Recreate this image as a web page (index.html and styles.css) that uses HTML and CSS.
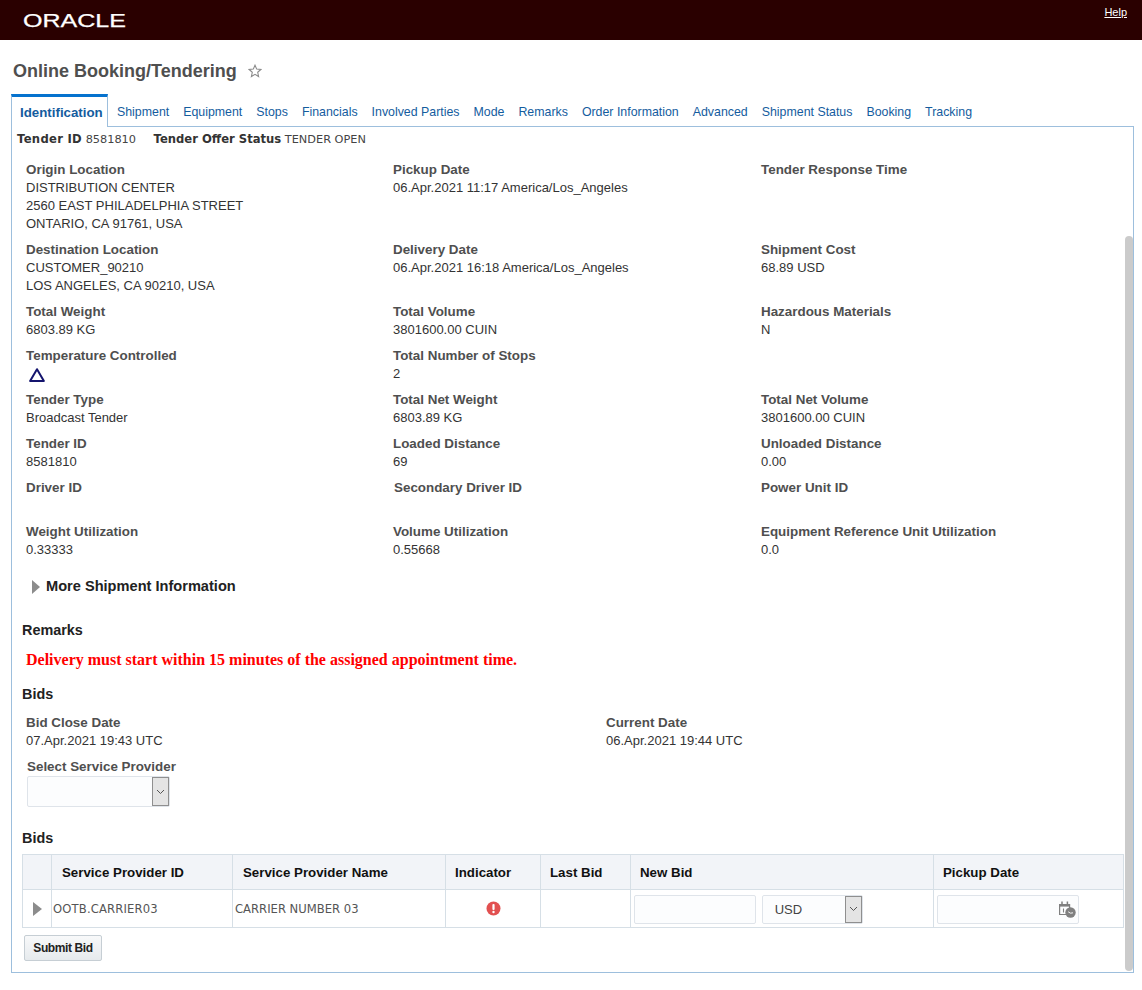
FILE: index.html
```html
<!DOCTYPE html>
<html lang="en">
<head>
<meta charset="utf-8">
<title>Online Booking/Tendering</title>
<link rel="stylesheet" href="styles.css">
</head>
<body>
<header class="brand">
  <svg class="logo" width="106" height="26" viewBox="0 0 106 26" role="img" aria-label="Oracle">
    <text x="0" y="19" class="logo-text" textLength="103" lengthAdjust="spacingAndGlyphs">ORACLE</text>
  </svg>
  <a class="help" href="#">Help</a>
</header>
<div class="title-row">
  <h1>Online Booking/Tendering</h1>
  <svg class="star" width="14" height="14" viewBox="0 0 14 14"><path d="M7 1.2l1.7 3.9 4.1.4-3.1 2.8.9 4.2L7 10.3l-3.6 2.2.9-4.2L1.2 5.5l4.1-.4z" fill="none" stroke="#8a8a8a" stroke-width="1.1"/></svg>
</div>
<nav class="tabs">
  <a class="tab active" href="#">Identification</a>
  <a class="tab" href="#">Shipment</a>
  <a class="tab" href="#">Equipment</a>
  <a class="tab" href="#">Stops</a>
  <a class="tab" href="#">Financials</a>
  <a class="tab" href="#">Involved Parties</a>
  <a class="tab" href="#">Mode</a>
  <a class="tab" href="#">Remarks</a>
  <a class="tab" href="#">Order Information</a>
  <a class="tab" href="#">Advanced</a>
  <a class="tab" href="#">Shipment Status</a>
  <a class="tab" href="#">Booking</a>
  <a class="tab" href="#">Tracking</a>
</nav>
<main class="panel">
  <div class="scrollbar"></div>
  <p class="summary"><b class="lead">Tender ID</b> 8581810 <b class="gap">Tender Offer Status</b> TENDER OPEN</p>
  <section class="facts">
    <div class="fact"><div class="label">Origin Location</div><div>DISTRIBUTION CENTER</div><div>2560 EAST PHILADELPHIA STREET</div><div>ONTARIO, CA 91761, USA</div></div>
    <div class="fact"><div class="label">Pickup Date</div><div>06.Apr.2021 11:17 America/Los_Angeles</div></div>
    <div class="fact"><div class="label">Tender Response Time</div></div>
    <div class="fact"><div class="label">Destination Location</div><div>CUSTOMER_90210</div><div>LOS ANGELES, CA 90210, USA</div></div>
    <div class="fact"><div class="label">Delivery Date</div><div>06.Apr.2021 16:18 America/Los_Angeles</div></div>
    <div class="fact"><div class="label">Shipment Cost</div><div>68.89 USD</div></div>
    <div class="fact"><div class="label">Total Weight</div><div>6803.89 KG</div></div>
    <div class="fact"><div class="label">Total Volume</div><div>3801600.00 CUIN</div></div>
    <div class="fact"><div class="label">Hazardous Materials</div><div>N</div></div>
    <div class="fact"><div class="label">Temperature Controlled</div><div class="icon-line"><svg width="18" height="18" viewBox="0 0 18 18"><path d="M9 4.2L15.9 16H2.1z" fill="none" stroke="#14146e" stroke-width="2" stroke-linejoin="round"/></svg></div></div>
    <div class="fact"><div class="label">Total Number of Stops</div><div>2</div></div>
    <div class="fact"></div>
    <div class="fact"><div class="label">Tender Type</div><div>Broadcast Tender</div></div>
    <div class="fact"><div class="label">Total Net Weight</div><div>6803.89 KG</div></div>
    <div class="fact"><div class="label">Total Net Volume</div><div>3801600.00 CUIN</div></div>
    <div class="fact"><div class="label">Tender ID</div><div>8581810</div></div>
    <div class="fact"><div class="label">Loaded Distance</div><div>69</div></div>
    <div class="fact"><div class="label">Unloaded Distance</div><div>0.00</div></div>
    <div class="fact tall"><div class="label">Driver ID</div></div>
    <div class="fact tall nudge"><div class="label">Secondary Driver ID</div></div>
    <div class="fact tall"><div class="label">Power Unit ID</div></div>
    <div class="fact"><div class="label">Weight Utilization</div><div>0.33333</div></div>
    <div class="fact"><div class="label">Volume Utilization</div><div>0.55668</div></div>
    <div class="fact"><div class="label">Equipment Reference Unit Utilization</div><div>0.0</div></div>
  </section>
  <div class="disclosure">
    <svg width="10" height="14" viewBox="0 0 10 14"><path d="M1 0l8 7-8 7z" fill="#8c8c8c"/></svg>
    <span>More Shipment Information</span>
  </div>
  <h2 class="section remarks-head">Remarks</h2>
  <p class="notice">Delivery must start within 15 minutes of the assigned appointment time.</p>
  <h2 class="section bids-head">Bids</h2>
  <section class="dates">
    <div class="fact"><div class="label">Bid Close Date</div><div>07.Apr.2021 19:43 UTC</div></div>
    <div class="fact"><div class="label">Current Date</div><div>06.Apr.2021 19:44 UTC</div></div>
  </section>
  <div class="provider">
    <div class="label">Select Service Provider</div>
    <div class="select provider-select"><span class="select-value"></span><span class="select-btn"><svg width="9" height="6" viewBox="0 0 9 6"><path d="M1 1l3.5 3.5L8 1" fill="none" stroke="#555" stroke-width="1"/></svg></span></div>
  </div>
  <h2 class="section table-head">Bids</h2>
  <table class="bids">
    <colgroup>
      <col class="c0"><col class="c1"><col class="c2"><col class="c3"><col class="c4"><col class="c5"><col class="c6">
    </colgroup>
    <thead>
      <tr><th></th><th class="pad">Service Provider ID</th><th class="pad">Service Provider Name</th><th>Indicator</th><th>Last Bid</th><th>New Bid</th><th>Pickup Date</th></tr>
    </thead>
    <tbody>
      <tr>
        <td class="arrow"><svg width="9" height="14" viewBox="0 0 9 14"><path d="M0 0l9 7-9 7z" fill="#8c8c8c"/></svg></td>
        <td class="mono first">OOTB.CARRIER03</td>
        <td class="mono">CARRIER NUMBER 03</td>
        <td class="center"><svg width="15" height="15" viewBox="0 0 15 15"><circle cx="7.5" cy="7.5" r="7" fill="#e25050"/><rect x="6.4" y="3" width="2.2" height="6" rx="1" fill="#fff"/><circle cx="7.5" cy="11" r="1.2" fill="#fff"/></svg></td>
        <td></td>
        <td class="inputs">
          <span class="field bid-field"></span>
          <div class="select currency"><span class="select-value">USD</span><span class="select-btn"><svg width="9" height="6" viewBox="0 0 9 6"><path d="M1 1l3.5 3.5L8 1" fill="none" stroke="#555" stroke-width="1"/></svg></span></div>
        </td>
        <td class="inputs">
          <span class="field date-field"><svg width="17" height="17" viewBox="0 0 17 17"><path d="M.6 3.5h10v10H.6z" fill="none" stroke="#808080" stroke-width="1.2"/><path d="M.6 3h10v2.6H.6z" fill="#808080"/><path d="M3 .5v3.5M8.4 .5v3.5" stroke="#808080" stroke-width="1.5"/><path d="M4.5 7.5v4" stroke="#808080" stroke-width="1.1"/><circle cx="11.5" cy="11.5" r="5.2" fill="#808080"/><path d="M9.2 10.8l2.4 1.4 2.4-.4" fill="none" stroke="#fff" stroke-width=".9"/></svg></span>
        </td>
      </tr>
    </tbody>
  </table>
  <button class="submit" type="button">Submit Bid</button>
</main>
</body>
</html>
```

FILE: styles.css
```css
html, body { margin: 0; padding: 0; background: #fff; }
body {
  font-family: "Liberation Sans", Arial, sans-serif;
  font-size: 13px;
  color: #333;
  width: 1142px;
  height: 990px;
  overflow: hidden;
}
.brand {
  height: 40px;
  background: #2a0000;
  display: flex;
  justify-content: space-between;
  align-items: flex-start;
  padding: 0 15px 0 23px;
}
.logo { margin-top: 8px; }
.logo-text { font-family: "Liberation Sans", Arial, sans-serif; font-size: 18.5px; fill: #fff; stroke: #fff; stroke-width: .25px; }
.help { color: #fff; font-size: 11px; margin-top: 6px; }
.title-row {
  height: 54px;
  display: flex;
  align-items: center;
  padding-left: 13px;
  gap: 11px;
  padding-top: 8px;
  box-sizing: border-box;
}
h1 { margin: 0; font-size: 18px; font-weight: bold; color: #4f4f4f; line-height: 22px; }
.tabs {
  display: flex;
  align-items: flex-end;
  height: 33px;
  margin-left: 11px;
  position: relative;
  z-index: 1;
}
.tab {
  color: #145c9e;
  text-decoration: none;
  font-size: 12.37px;
  padding: 0 7px 7px;
  line-height: 16px;
}
.active {
  box-sizing: border-box;
  width: 97px;
  height: 33px;
  border: 1px solid #9dbfdd;
  border-top: 3px solid #0572ce;
  border-bottom: 0;
  background: #fff;
  font-weight: bold;
  font-size: 13.3px;
  padding: 8px 0 0 8px;
  white-space: nowrap;
  margin-right: 2px;
}
.panel {
  box-sizing: border-box;
  position: relative;
  width: 1123px;
  height: 847px;
  margin: -1px 0 0 11px;
  border: 1px solid #9dbfdd;
  padding: 0 9px 0 10px;
}
.scrollbar {
  position: absolute;
  left: 1113px;
  top: 109px;
  width: 8px;
  height: 735px;
  background: #cbcbcb;
  border-radius: 4px;
}
.summary {
  margin: 4px 0 0 -5px;
  height: 16px;
  line-height: 16px;
  font-family: "DejaVu Sans", Verdana, sans-serif;
  font-size: 11.3px;
  color: #444;
  white-space: nowrap;
}
.summary b { font-weight: bold; font-size: 11.6px; color: #333; }
.summary .lead { letter-spacing: .3px; }
.summary .gap { margin-left: 14px; }
.facts {
  display: grid;
  grid-template-columns: 367px 368px 1fr;
  row-gap: 8px;
  margin: 14px 0 0 4px;
}
.fact { line-height: 18px; }
.fact.tall { min-height: 36px; }
.nudge { padding-left: 1px; }
.label { font-weight: bold; font-size: 13.4px; color: #4f4f4f; line-height: 18px; }
.fact > div:not(.label) { height: 18px; }
.icon-line svg { display: block; margin-left: 2px; }
.disclosure {
  display: flex;
  align-items: center;
  gap: 5px;
  height: 18px;
  margin: 18px 0 0 9px;
  font-size: 14.6px;
  font-weight: bold;
  color: #222;
}
.disclosure svg { margin-top: 2px; }
.section { margin: 0; font-size: 14.4px; line-height: 18px; font-weight: bold; color: #222; }
.remarks-head { margin-top: 26px; }
.notice {
  margin: 12px 0 0 4px;
  font-family: "Liberation Serif", "Times New Roman", serif;
  font-size: 16px;
  font-weight: bold;
  line-height: 18px;
  color: #f00;
}
.bids-head { margin-top: 16px; }
.dates {
  display: grid;
  grid-template-columns: 580px 1fr;
  margin: 11px 0 0 4px;
}
.provider { margin: 8px 0 0 5px; }
.select {
  box-sizing: border-box;
  display: flex;
  border: 1px solid #dfe4ea;
  border-radius: 2px;
  background: #fcfdfe;
}
.provider-select { width: 143px; height: 31px; }
.select-value { flex: 1; }
.select-btn {
  width: 17px;
  display: flex;
  align-items: center;
  justify-content: center;
  background: #e4e4e4;
  border: 1px solid #8f8f8f;
  box-sizing: border-box;
}
.table-head { margin-top: 22px; }
.bids {
  table-layout: fixed;
  border-collapse: collapse;
  width: 1101px;
  margin-top: 7px;
  font-size: 13.3px;
}
.c0 { width: 29px; }
.c1 { width: 181px; }
.c2 { width: 213px; }
.c3 { width: 95px; }
.c4 { width: 90px; }
.c5 { width: 303px; }
.c6 { width: 190px; }
.bids th, .bids td { border: 1px solid #d6dfe6; padding: 0; }
.bids th {
  height: 34px;
  background: #f2f4f8;
  color: #111;
  font-weight: bold;
  text-align: left;
  padding-left: 9px;
}
.bids th.pad { padding-left: 10px; }
.bids td { height: 37px; color: #444; }
.arrow { text-align: center; }
.arrow svg { display: block; margin: 1px auto 0; }
.bids td.mono {
  font-family: "DejaVu Sans", Verdana, sans-serif;
  font-size: 11.6px;
  height: 36px;
  padding: 1px 0 0 2px;
  white-space: nowrap;
  color: #555;
}
.bids td.first { padding-left: 1px; letter-spacing: .15px; }
.center { text-align: center; }
.center svg { display: block; margin: 0 auto; }
.bids td.inputs { height: 36px; padding: 1px 3px 0; }
.inputs { white-space: nowrap; }
.inputs > * { vertical-align: middle; }
.field {
  box-sizing: border-box;
  display: inline-flex;
  align-items: center;
  justify-content: flex-end;
  border: 1px solid #dfe4ea;
  border-radius: 2px;
  background: #fcfdfe;
  height: 29px;
}
.bid-field { width: 122px; }
.date-field { width: 142px; padding-right: 2px; }
.date-field svg { margin-top: 1px; }
.currency {
  display: inline-flex;
  width: 101px;
  height: 29px;
  margin-left: 2px;
  font-size: 13px;
}
.currency .select-value { padding-left: 12px; line-height: 28px; }
.submit {
  display: block;
  width: 78px;
  height: 26px;
  margin: 7px 0 0 2px;
  padding: 0;
  border: 1px solid #c6ced4;
  border-radius: 2px;
  background: linear-gradient(#f8f9fa, #e6eaed);
  font-family: "Liberation Sans", Arial, sans-serif;
  font-size: 12px;
  letter-spacing: -.4px;
  font-weight: bold;
  color: #222;
}
```
